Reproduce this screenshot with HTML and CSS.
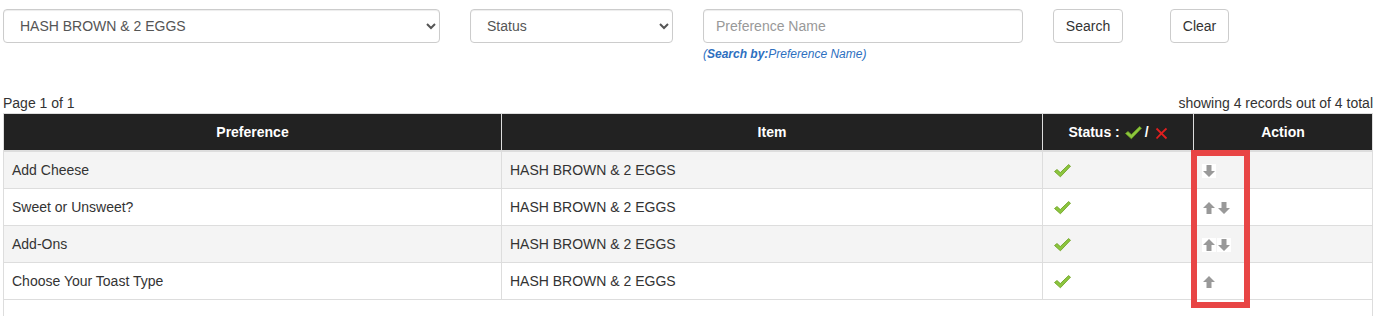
FILE: index.html
```html
<!DOCTYPE html>
<html lang="en">
<head>
    <meta charset="UTF-8">
    <meta name="viewport" content="width=device-width, initial-scale=1.0">
    <title>Preferences</title>
    <link rel="stylesheet" href="styles.css">
</head>
<body>
    <div class="page">
        <!-- filter bar -->
        <form class="filters">
            <select class="form-control item-select">
                <option>HASH BROWN &amp; 2 EGGS</option>
            </select>
            <select class="form-control status-select">
                <option>Status</option>
            </select>
            <div class="search-field">
                <input type="text" class="form-control" placeholder="Preference Name">
                <p class="hint">(<b>Search by:</b>Preference Name)</p>
            </div>
            <button type="button" class="btn btn-search">Search</button>
            <button type="button" class="btn btn-clear">Clear</button>
        </form>

        <div class="pager">
            <span>Page 1 of 1</span>
            <span>showing 4 records out of 4 total</span>
        </div>

        <div class="table-wrap">
            <table class="grid">
                <colgroup>
                    <col class="col-pref">
                    <col class="col-item">
                    <col class="col-status">
                    <col class="col-action">
                </colgroup>
                <thead>
                    <tr>
                        <th>Preference</th>
                        <th>Item</th>
                        <th>Status :<svg class="ok head-ok" width="17" height="14" viewBox="0 0 17 14"><path d="M0.5 7.5 L3 5.5 L6.3 8.6 L14.6 0.6 L16.5 2.2 L6.4 12.8 Z" fill="#8cc63f" stroke="#6a9d1c" stroke-width="0.8"/></svg>/<svg class="no" width="13" height="13" viewBox="0 0 13 13"><path d="M1.5 1.5 Q6 6 11.5 11.5 M11.5 1.5 Q7 5.5 1.5 11.5" stroke="#e01f1f" stroke-width="1.8" fill="none"/></svg></th>
                        <th>Action</th>
                    </tr>
                </thead>
                <tbody>
                    <tr>
                        <td>Add Cheese</td>
                        <td>HASH BROWN &amp; 2 EGGS</td>
                        <td><svg class="ok" width="17" height="14" viewBox="0 0 17 14"><path d="M0.5 7.5 L3 5.5 L6.3 8.6 L14.6 0.6 L16.5 2.2 L6.4 12.8 Z" fill="#8cc63f" stroke="#6a9d1c" stroke-width="0.8"/></svg></td>
                        <td><span class="move">
                            <svg class="arrow" width="14" height="14" viewBox="0 0 14 14"><path d="M4.5 1 H9.5 V7 H13 L7 13 L1 7 H4.5 Z" fill="#999"/></svg>
                        </span></td>
                    </tr>
                    <tr>
                        <td>Sweet or Unsweet?</td>
                        <td>HASH BROWN &amp; 2 EGGS</td>
                        <td><svg class="ok" width="17" height="14" viewBox="0 0 17 14"><path d="M0.5 7.5 L3 5.5 L6.3 8.6 L14.6 0.6 L16.5 2.2 L6.4 12.8 Z" fill="#8cc63f" stroke="#6a9d1c" stroke-width="0.8"/></svg></td>
                        <td><span class="move">
                            <svg class="arrow" width="14" height="14" viewBox="0 0 14 14"><path d="M7 1 L13 7 H9.5 V13 H4.5 V7 H1 Z" fill="#999"/></svg>
                            <svg class="arrow" width="14" height="14" viewBox="0 0 14 14"><path d="M4.5 1 H9.5 V7 H13 L7 13 L1 7 H4.5 Z" fill="#999"/></svg>
                        </span></td>
                    </tr>
                    <tr>
                        <td>Add-Ons</td>
                        <td>HASH BROWN &amp; 2 EGGS</td>
                        <td><svg class="ok" width="17" height="14" viewBox="0 0 17 14"><path d="M0.5 7.5 L3 5.5 L6.3 8.6 L14.6 0.6 L16.5 2.2 L6.4 12.8 Z" fill="#8cc63f" stroke="#6a9d1c" stroke-width="0.8"/></svg></td>
                        <td><span class="move">
                            <svg class="arrow" width="14" height="14" viewBox="0 0 14 14"><path d="M7 1 L13 7 H9.5 V13 H4.5 V7 H1 Z" fill="#999"/></svg>
                            <svg class="arrow" width="14" height="14" viewBox="0 0 14 14"><path d="M4.5 1 H9.5 V7 H13 L7 13 L1 7 H4.5 Z" fill="#999"/></svg>
                        </span></td>
                    </tr>
                    <tr>
                        <td>Choose Your Toast Type</td>
                        <td>HASH BROWN &amp; 2 EGGS</td>
                        <td><svg class="ok" width="17" height="14" viewBox="0 0 17 14"><path d="M0.5 7.5 L3 5.5 L6.3 8.6 L14.6 0.6 L16.5 2.2 L6.4 12.8 Z" fill="#8cc63f" stroke="#6a9d1c" stroke-width="0.8"/></svg></td>
                        <td><span class="move">
                            <svg class="arrow" width="14" height="14" viewBox="0 0 14 14"><path d="M7 1 L13 7 H9.5 V13 H4.5 V7 H1 Z" fill="#999"/></svg>
                        </span></td>
                    </tr>
                    <tr class="empty">
                        <td colspan="4"></td>
                    </tr>
                </tbody>
            </table>
            <!-- red annotation box round the action arrows -->
            <div class="highlight"></div>
        </div>
    </div>
</body>
</html>
```

FILE: styles.css
```css
*{
    box-sizing: border-box;
}
body{
    margin: 0;
    font-family: "Liberation Sans", Arial, sans-serif;
    font-size: 14px;
    line-height: 20px;
    color: #333;
    background: #fff;
}
.page{
    padding: 9px 0 0 3px;
}
.filters{
    display: flex;
    align-items: flex-start;
    height: 84px;
    margin: 0;
}
.form-control{
    height: 34px;
    padding: 6px 12px;
    border: 1px solid #ccc;
    border-radius: 4px;
    background: #fff;
    color: #555;
    font: inherit;
    box-shadow: inset 0 1px 1px rgba(0, 0, 0, .075);
}
.form-control::placeholder{
    color: #999;
}
.item-select{
    width: 437px;
    margin-right: 30px;
}
.status-select{
    width: 203px;
    margin-right: 30px;
}
.search-field{
    width: 320px;
    margin-right: 30px;
}
.search-field input{
    width: 100%;
}
.hint{
    margin: 4px 0 0;
    font-size: 12px;
    line-height: 14px;
    font-style: italic;
    color: #2d6fbf;
}
.btn{
    height: 34px;
    padding: 6px 0;
    border: 1px solid #ccc;
    border-radius: 4px;
    background: #fff;
    color: #333;
    font: inherit;
    text-align: center;
}
.btn-search{
    width: 70px;
    margin-right: 47px;
}
.btn-clear{
    width: 59px;
}
.pager{
    display: flex;
    justify-content: space-between;
    width: 1370px;
}
.table-wrap{
    position: relative;
    width: 1370px;
}
.grid{
    width: 1370px;
    table-layout: fixed;
    border-collapse: collapse;
    border: 1px solid #ddd;
}
.col-pref{
    width: 498px;
}
.col-item{
    width: 541px;
}
.col-status{
    width: 151px;
}
.grid th{
    padding: 8px;
    background: #222;
    color: #fff;
    font-weight: bold;
    text-align: center;
    border: 1px solid #ddd;
    border-bottom: 2px solid #ddd;
}
.grid td{
    height: 37px;
    padding: 8px;
    border: 1px solid #ddd;
    vertical-align: middle;
}
.grid tbody tr:nth-child(odd) td{
    background: #f4f4f4;
}
.grid tbody tr.empty td{
    background: #fff;
}
.ok, .no{
    vertical-align: middle;
}
.head-ok{
    margin: 0 3px 0 5px;
}
.no{
    margin-left: 6px;
}
.grid td .ok{
    margin-left: 3px;
}
.move{
    display: inline-flex;
    gap: 1px;
    vertical-align: middle;
}
.arrow{
    display: block;
    background: #fff;
}
.highlight{
    position: absolute;
    left: 1188px;
    top: 37px;
    width: 59px;
    height: 158px;
    border: 6px solid #e84545;
}
```
